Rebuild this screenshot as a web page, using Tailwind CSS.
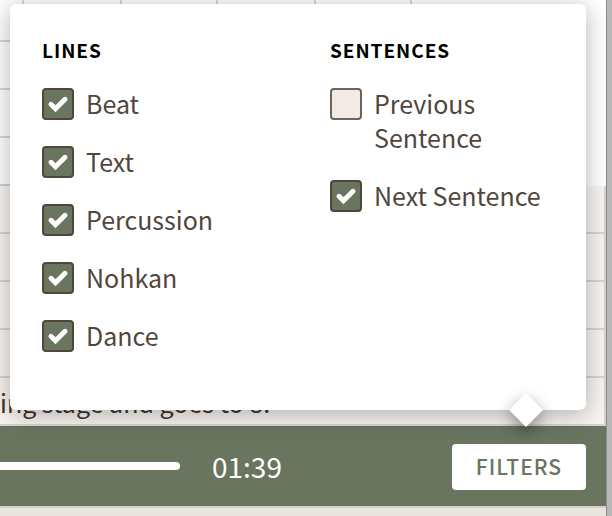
<!DOCTYPE html>
<html lang="en">
<head>
<meta charset="utf-8">
<meta name="viewport" content="width=device-width, initial-scale=1">
<title>Filters</title>
<script src="https://cdn.jsdelivr.net/npm/@tailwindcss/browser@4"></script>
</head>
<body class="flex min-h-screen bg-[#ebe5e0] font-['Noto_Sans_CJK_JP','Noto_Sans',sans-serif] text-[25px] text-[#51463c]">
<svg class="hidden"><symbol id="check" viewBox="0 0 22 18"><path d="M4 9.300l4.500 4.500L18 4.300" fill="none" stroke="white" stroke-width="5" stroke-linecap="round"/></symbol></svg>
<div class="relative flex min-w-0 flex-1 flex-col">
  <main class="overflow-hidden">
    <div class="flex bg-white">
      <div class="w-6 border-r-2 border-[#d6d6d6]">
        <div class="h-[42px] border-b-2 border-[#d6d6d6]"></div>
        <div class="h-12 border-b-2 border-[#d6d6d6]"></div>
        <div class="h-12 border-b-2 border-[#d6d6d6]"></div>
        <div class="h-12 border-b-2 border-[#d6d0cc]"></div>
      </div>
      <div class="w-[98px] border-r-2 border-[#d6d6d6]"></div>
      <div class="w-24 border-r-2 border-[#d6d6d6]"></div>
      <div class="w-[98px] border-r-2 border-[#d6d6d6]"></div>
      <div class="w-24 border-r-2 border-[#d6d6d6]"></div>
    </div>
    <div class="border-r-2 border-[#dad2ce] bg-[#f8f4f1]">
      <div class="h-12 border-b-2 border-[#dad2ce]"></div>
      <div class="h-12 border-b-2 border-[#dad2ce]"></div>
      <div class="h-12 border-b-2 border-[#dad2ce]"></div>
      <div class="h-12 border-b-2 border-[#dad2ce]"></div>
      <p class="h-12 border-b-2 border-[#dad2ce] leading-[48px] whitespace-nowrap text-[#3d332b]">ing stage and goes to 8.</p>
    </div>
  </main>

  <footer class="flex h-20 items-center bg-[#69755e] pr-5 text-white">
    <div class="h-2 w-[180px] rounded-r-full bg-white"></div>
    <time class="ml-8 text-[28px] leading-10">01:39</time>
    <button type="button" class="mt-0.5 ml-auto h-[46px] w-[134px] rounded-sm bg-white text-[21px] font-medium tracking-wider text-[#69755e]">FILTERS</button>
  </footer>
  <div class="flex-1 border-t-2 border-[#d9cfc9] bg-[#ebe5e0]"></div>

  <section aria-label="Filters" class="absolute top-1 right-5 left-2.5 grid h-[406px] grid-cols-2 rounded-md bg-white p-8 shadow-[0_4px_24px_rgba(0,0,0,0.3)]">
    <fieldset class="flex flex-col gap-6">
      <legend class="mb-[22px] text-[19px] leading-7 font-bold tracking-wider text-black">LINES</legend>
      <label class="flex gap-3 leading-[34px]"><span class="mt-0.5 grid size-8 shrink-0 place-items-center"><input type="checkbox" checked class="peer col-start-1 row-start-1 size-8 appearance-none rounded-sm border-2 border-[#6f645a] bg-[#f0ebe5] checked:border-[#51463c] checked:bg-[#69755e]"><svg class="pointer-events-none invisible z-10 col-start-1 row-start-1 h-[18px] w-[22px] peer-checked:visible"><use href="#check"/></svg></span>Beat</label>
      <label class="flex gap-3 leading-[34px]"><span class="mt-0.5 grid size-8 shrink-0 place-items-center"><input type="checkbox" checked class="peer col-start-1 row-start-1 size-8 appearance-none rounded-sm border-2 border-[#6f645a] bg-[#f0ebe5] checked:border-[#51463c] checked:bg-[#69755e]"><svg class="pointer-events-none invisible z-10 col-start-1 row-start-1 h-[18px] w-[22px] peer-checked:visible"><use href="#check"/></svg></span>Text</label>
      <label class="flex gap-3 leading-[34px]"><span class="mt-0.5 grid size-8 shrink-0 place-items-center"><input type="checkbox" checked class="peer col-start-1 row-start-1 size-8 appearance-none rounded-sm border-2 border-[#6f645a] bg-[#f0ebe5] checked:border-[#51463c] checked:bg-[#69755e]"><svg class="pointer-events-none invisible z-10 col-start-1 row-start-1 h-[18px] w-[22px] peer-checked:visible"><use href="#check"/></svg></span>Percussion</label>
      <label class="flex gap-3 leading-[34px]"><span class="mt-0.5 grid size-8 shrink-0 place-items-center"><input type="checkbox" checked class="peer col-start-1 row-start-1 size-8 appearance-none rounded-sm border-2 border-[#6f645a] bg-[#f0ebe5] checked:border-[#51463c] checked:bg-[#69755e]"><svg class="pointer-events-none invisible z-10 col-start-1 row-start-1 h-[18px] w-[22px] peer-checked:visible"><use href="#check"/></svg></span>Nohkan</label>
      <label class="flex gap-3 leading-[34px]"><span class="mt-0.5 grid size-8 shrink-0 place-items-center"><input type="checkbox" checked class="peer col-start-1 row-start-1 size-8 appearance-none rounded-sm border-2 border-[#6f645a] bg-[#f0ebe5] checked:border-[#51463c] checked:bg-[#69755e]"><svg class="pointer-events-none invisible z-10 col-start-1 row-start-1 h-[18px] w-[22px] peer-checked:visible"><use href="#check"/></svg></span>Dance</label>
    </fieldset>
    <fieldset class="ml-8 flex flex-col gap-6">
      <legend class="mb-[22px] text-[19px] leading-7 font-bold tracking-wider text-black">SENTENCES</legend>
      <label class="flex gap-3 leading-[34px]"><span class="mt-0.5 grid size-8 shrink-0 place-items-center"><input type="checkbox" class="peer col-start-1 row-start-1 size-8 appearance-none rounded-sm border-2 border-[#6f645a] bg-[#f0ebe5] checked:border-[#51463c] checked:bg-[#69755e]"><svg class="pointer-events-none invisible z-10 col-start-1 row-start-1 h-[18px] w-[22px] peer-checked:visible"><use href="#check"/></svg></span>Previous Sentence</label>
      <label class="flex gap-3 leading-[34px]"><span class="mt-0.5 grid size-8 shrink-0 place-items-center"><input type="checkbox" checked class="peer col-start-1 row-start-1 size-8 appearance-none rounded-sm border-2 border-[#6f645a] bg-[#f0ebe5] checked:border-[#51463c] checked:bg-[#69755e]"><svg class="pointer-events-none invisible z-10 col-start-1 row-start-1 h-[18px] w-[22px] peer-checked:visible"><use href="#check"/></svg></span>Next Sentence</label>
    </fieldset>
    <span class="absolute right-12 -bottom-3 size-6 rotate-45 bg-white shadow-[4px_4px_16px_rgba(0,0,0,0.4)]"></span>
  </section>
</div>
<div class="w-1.5 shrink-0 border-l border-[#8c8c8c] bg-[#b9b9b9]"></div>
</body>
</html>
